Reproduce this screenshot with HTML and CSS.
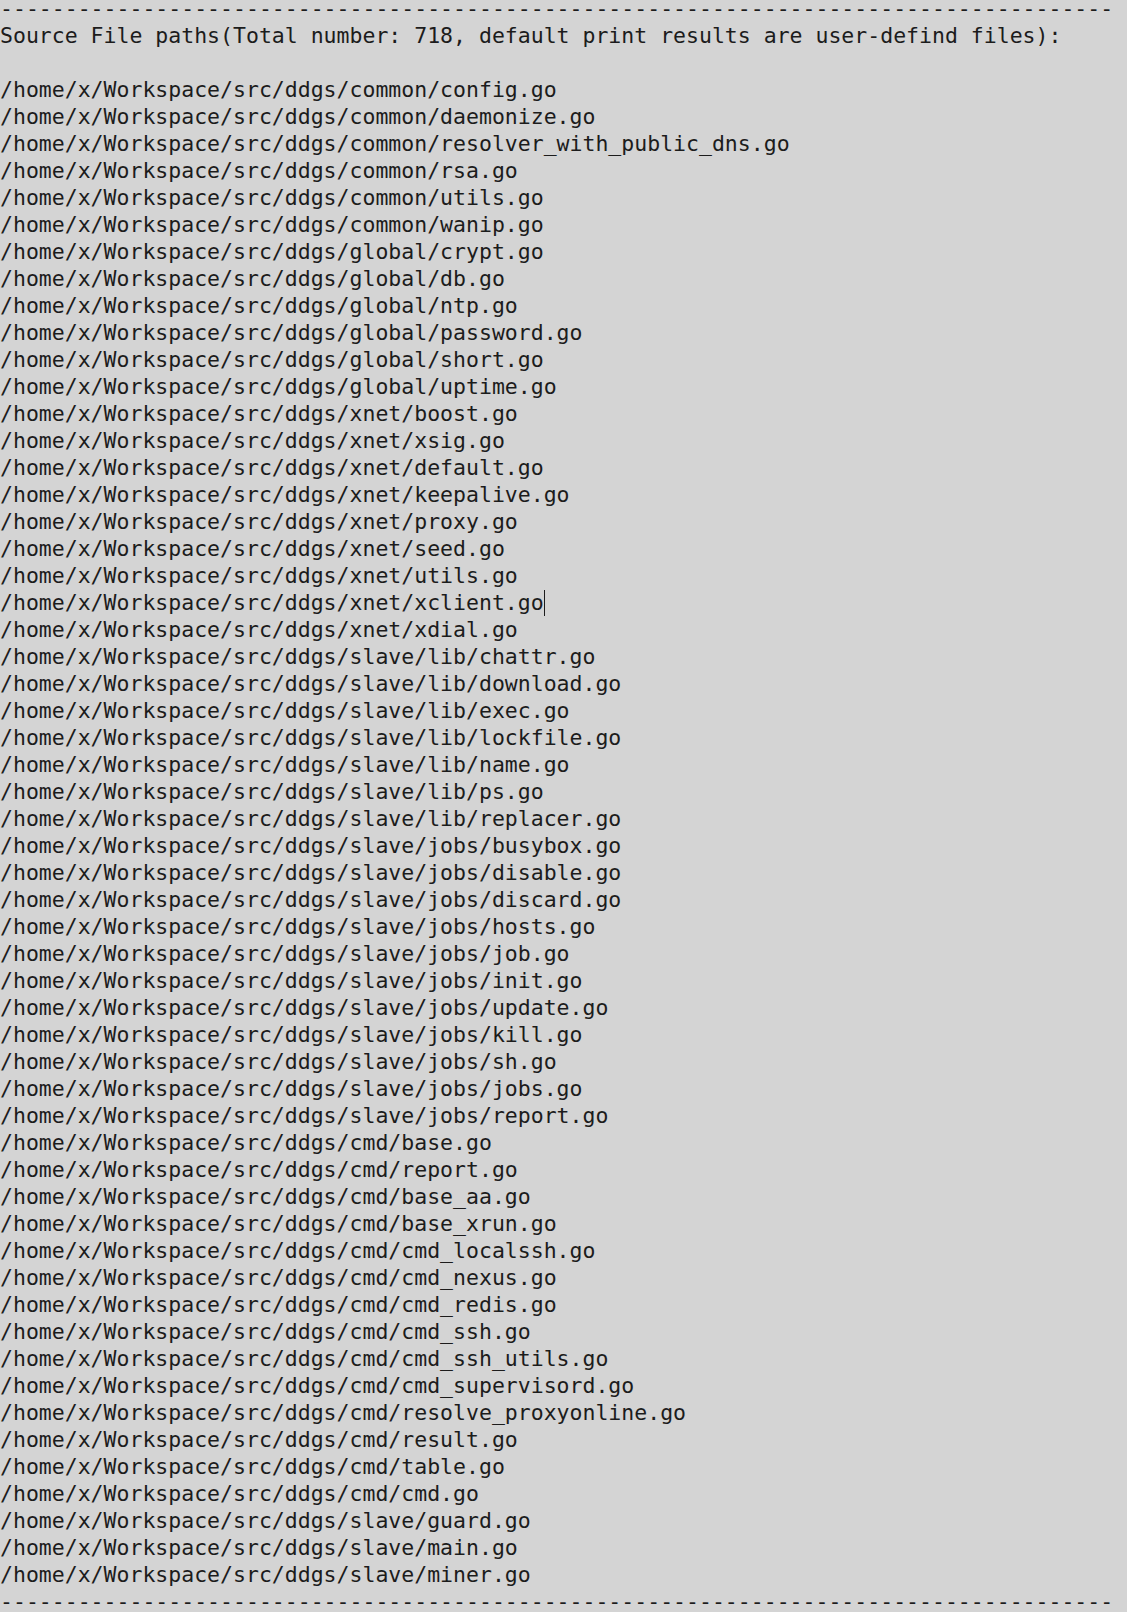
FILE: index.html
```html
<!DOCTYPE html>
<html lang="en">
<head>
  <meta charset="UTF-8" />
  <title>Source File paths</title>
  <link rel="stylesheet" href="styles.css">
</head>
<body>
<pre class="console">--------------------------------------------------------------------------------------
Source File paths(Total number: 718, default print results are user-defind files):

/home/x/Workspace/src/ddgs/common/config.go
/home/x/Workspace/src/ddgs/common/daemonize.go
/home/x/Workspace/src/ddgs/common/resolver_with_public_dns.go
/home/x/Workspace/src/ddgs/common/rsa.go
/home/x/Workspace/src/ddgs/common/utils.go
/home/x/Workspace/src/ddgs/common/wanip.go
/home/x/Workspace/src/ddgs/global/crypt.go
/home/x/Workspace/src/ddgs/global/db.go
/home/x/Workspace/src/ddgs/global/ntp.go
/home/x/Workspace/src/ddgs/global/password.go
/home/x/Workspace/src/ddgs/global/short.go
/home/x/Workspace/src/ddgs/global/uptime.go
/home/x/Workspace/src/ddgs/xnet/boost.go
/home/x/Workspace/src/ddgs/xnet/xsig.go
/home/x/Workspace/src/ddgs/xnet/default.go
/home/x/Workspace/src/ddgs/xnet/keepalive.go
/home/x/Workspace/src/ddgs/xnet/proxy.go
/home/x/Workspace/src/ddgs/xnet/seed.go
/home/x/Workspace/src/ddgs/xnet/utils.go
/home/x/Workspace/src/ddgs/xnet/xclient.go<span class="caret"></span>
/home/x/Workspace/src/ddgs/xnet/xdial.go
/home/x/Workspace/src/ddgs/slave/lib/chattr.go
/home/x/Workspace/src/ddgs/slave/lib/download.go
/home/x/Workspace/src/ddgs/slave/lib/exec.go
/home/x/Workspace/src/ddgs/slave/lib/lockfile.go
/home/x/Workspace/src/ddgs/slave/lib/name.go
/home/x/Workspace/src/ddgs/slave/lib/ps.go
/home/x/Workspace/src/ddgs/slave/lib/replacer.go
/home/x/Workspace/src/ddgs/slave/jobs/busybox.go
/home/x/Workspace/src/ddgs/slave/jobs/disable.go
/home/x/Workspace/src/ddgs/slave/jobs/discard.go
/home/x/Workspace/src/ddgs/slave/jobs/hosts.go
/home/x/Workspace/src/ddgs/slave/jobs/job.go
/home/x/Workspace/src/ddgs/slave/jobs/init.go
/home/x/Workspace/src/ddgs/slave/jobs/update.go
/home/x/Workspace/src/ddgs/slave/jobs/kill.go
/home/x/Workspace/src/ddgs/slave/jobs/sh.go
/home/x/Workspace/src/ddgs/slave/jobs/jobs.go
/home/x/Workspace/src/ddgs/slave/jobs/report.go
/home/x/Workspace/src/ddgs/cmd/base.go
/home/x/Workspace/src/ddgs/cmd/report.go
/home/x/Workspace/src/ddgs/cmd/base_aa.go
/home/x/Workspace/src/ddgs/cmd/base_xrun.go
/home/x/Workspace/src/ddgs/cmd/cmd_localssh.go
/home/x/Workspace/src/ddgs/cmd/cmd_nexus.go
/home/x/Workspace/src/ddgs/cmd/cmd_redis.go
/home/x/Workspace/src/ddgs/cmd/cmd_ssh.go
/home/x/Workspace/src/ddgs/cmd/cmd_ssh_utils.go
/home/x/Workspace/src/ddgs/cmd/cmd_supervisord.go
/home/x/Workspace/src/ddgs/cmd/resolve_proxyonline.go
/home/x/Workspace/src/ddgs/cmd/result.go
/home/x/Workspace/src/ddgs/cmd/table.go
/home/x/Workspace/src/ddgs/cmd/cmd.go
/home/x/Workspace/src/ddgs/slave/guard.go
/home/x/Workspace/src/ddgs/slave/main.go
/home/x/Workspace/src/ddgs/slave/miner.go
--------------------------------------------------------------------------------------</pre>
</body>
</html>
```

FILE: styles.css
```css
* {
  box-sizing: border-box;
  margin: 0;
  padding: 0;
}

html,
body {
  background-color: #d4d4d4;
  overflow: hidden;
}

/* terminal output */
.console {
  font-family: 'DejaVu Sans Mono', 'Liberation Mono', monospace;
  font-size: 21.5px;
  line-height: 27px;
  color: #1c1c1c;
  margin-top: -5px;
  white-space: pre;
}

.caret {
  display: inline-block;
  width: 0;
  height: 26px;
  border-left: 1px solid #1c1c1c;
  vertical-align: -6px;
}
```
